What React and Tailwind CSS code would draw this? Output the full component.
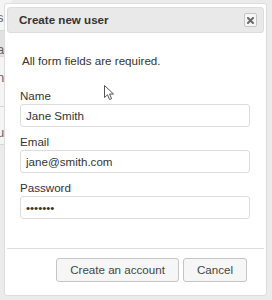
import { useState } from 'react'

const Field = ({ label, type = 'text', value, onChange }) => (
  <div className="mb-[8px]">
    <label className="block h-[14px] leading-[14px] mb-[1px] text-[#333333]">{label}</label>
    <input
      type={type}
      value={value}
      onChange={onChange}
      className="block w-full h-[23px] px-[5px] border border-[#dddddd] rounded-[3px] bg-white text-[11.6px] text-[#333333] outline-none font-['Liberation_Sans',Arial,sans-serif]"
    />
  </div>
)

const App = () => {
  const [formData, setFormData] = useState({
    name: 'Jane Smith',
    email: 'jane@smith.com',
    password: 'secret1'
  })

  return (
    <div className="relative w-[272px] h-[300px] overflow-hidden bg-[#ebebeb] font-['Liberation_Sans',Arial,sans-serif] text-[11.6px]">
      {/* page behind the dialog */}
      <div className="flex flex-col w-[12px] text-[13px] text-[#666666] leading-[14px]">
        <div className="h-[30px] bg-[#f4f4f4] pt-[11px] -indent-[3px]">s</div>
        <div className="h-[27px] bg-[#e2e2e2] pt-[12px] -indent-[3px] border-y border-[#d6d6d6]">a</div>
        <div className="h-[50px] bg-[#f4f4f4] pt-[14px] -indent-[3px] border-b border-[#d6d6d6]">n</div>
        <div className="h-[38px] bg-[#f4f4f4] pt-[19px] -indent-[3px] border-b border-[#d6d6d6]">u</div>
        <div className="flex-1 bg-[#f4f4f4]" />
      </div>

      {/* dialog */}
      <div className="absolute left-[4px] top-[3px] w-[263px] h-[293px] flex flex-col bg-white border border-[#dddddd] rounded-[3px] px-[2px] pt-[3px]">
        <div className="h-[26px] shrink-0 flex items-center justify-between pl-[11px] pr-[6px] bg-[#e9e9e9] border border-[#dddddd] rounded-[3px]">
          <span className="font-bold text-[#333333]">Create new user</span>
          <button className="w-[13px] h-[14px] flex items-center justify-center bg-[#f6f6f6] border border-[#c5c5c5] rounded-[2px]">
            <svg width="7" height="7" viewBox="0 0 7 7">
              <path d="M1 1 L6 6 M6 1 L1 6" stroke="#6b6b6b" strokeWidth="2" strokeLinecap="square" />
            </svg>
          </button>
        </div>

        <div className="flex-1 pl-[13px] pr-[14px]">
          <p className="mt-[21px] mb-[21px] pl-[2px] h-[14px] leading-[14px] text-[#333333]">All form fields are required.</p>
          <Field
            label="Name"
            value={formData.name}
            onChange={(e) => setFormData(prev => ({ ...prev, name: e.target.value }))}
          />
          <Field
            label="Email"
            value={formData.email}
            onChange={(e) => setFormData(prev => ({ ...prev, email: e.target.value }))}
          />
          <Field
            label="Password"
            type="password"
            value={formData.password}
            onChange={(e) => setFormData(prev => ({ ...prev, password: e.target.value }))}
          />
        </div>

        <div className="h-[47px] shrink-0 border-t border-[#dddddd] flex justify-end gap-[4px] pt-[9px] pr-[17px]">
          <button className="h-[24px] px-[13px] bg-[#f6f6f6] border border-[#c5c5c5] rounded-[3px] text-[#454545]">
            Create an account
          </button>
          <button className="h-[24px] px-[13px] bg-[#f6f6f6] border border-[#c5c5c5] rounded-[3px] text-[#454545]">
            Cancel
          </button>
        </div>
      </div>

      {/* mouse pointer */}
      <svg className="absolute left-[104px] top-[85px]" width="11" height="16" viewBox="0 0 11 16">
        <path d="M0.5 0.5 L0.5 12.5 L3.5 9.8 L5.6 14.6 L7.6 13.7 L5.6 9 L9.5 9 Z" fill="#ffffff" stroke="#555555" strokeWidth="1" strokeLinejoin="round" />
      </svg>
    </div>
  )
}

export default App
